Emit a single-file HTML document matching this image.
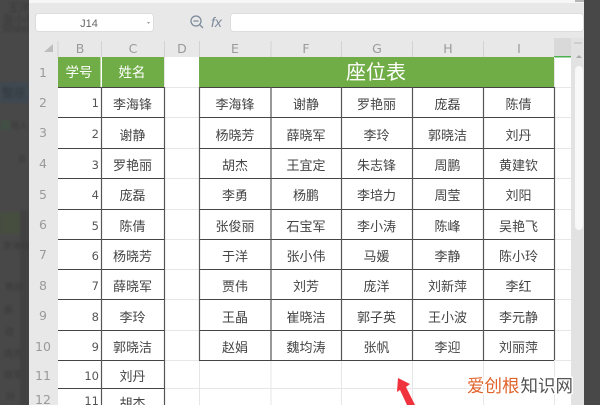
<!DOCTYPE html>
<html lang="zh"><head><meta charset="utf-8"><title>座位表</title>
<style>
html,body{margin:0;padding:0;width:600px;height:405px;overflow:hidden;background:#484848}
svg{display:block}
text{font-family:"Liberation Sans","Noto Sans CJK SC",sans-serif}
.c text{font-size:13px;fill:#444;text-anchor:middle}
.n text{font-family:"DejaVu Sans",sans-serif;font-size:11.5px;fill:#555;text-anchor:end}
.h text{font-family:"DejaVu Sans",sans-serif;font-size:12.5px;fill:#9a9a9a;text-anchor:middle}
</style></head><body>
<svg width="600" height="405" viewBox="0 0 600 405" xmlns="http://www.w3.org/2000/svg">
<defs><filter id="b1" color-interpolation-filters="sRGB"><feGaussianBlur stdDeviation="0.35"/></filter><filter id="b2" color-interpolation-filters="sRGB"><feGaussianBlur stdDeviation="1"/></filter></defs>
<rect width="600" height="405" fill="#484848"/>
<g filter="url(#b2)">
<rect x="0" y="82" width="29" height="21" fill="#3f4850"/>
<rect x="0" y="212" width="20" height="22" fill="#464e40"/>
<rect x="20" y="210" width="9" height="195" fill="#414141"/>
<rect x="1" y="120" width="9" height="10" fill="#414f44"/>
<g font-size="11" fill="#3a3a3a"><text x="8" y="11">王洋</text><text x="3" y="23">张小伟</text><text x="2" y="32">Sheet1</text><text x="2" y="97" font-size="12" fill="#333a40">整座</text><text x="11" y="128" font-size="8">插入</text><text x="19" y="162" font-size="10">B</text><text x="3" y="249" font-size="9">李海锋</text><text x="5" y="290" font-size="9">艳丽</text><text x="4" y="313" font-size="9">磊</text><text x="5" y="335" font-size="9">倩</text><text x="4" y="357" font-size="9">晓芳</text><text x="4" y="378" font-size="9">晓军</text><text x="6" y="400" font-size="9">玲</text></g>
</g>
<g filter="url(#b1)">
<rect x="29" y="0" width="555" height="405" fill="#e8e8e8"/>
<rect x="29" y="0" width="555" height="3" fill="#f6f6f6"/>
<rect x="575" y="0" width="9" height="2" fill="#b5b5b5"/>
<rect x="35.500" y="13.500" width="118" height="18" rx="3" fill="#fff" stroke="#ddd"/>
<text x="89" y="27" font-family="DejaVu Sans,sans-serif" font-size="11" fill="#666" text-anchor="middle">J14</text>
<path d="M147 22l3 0-1.500 2z" fill="#999"/>
<circle cx="196" cy="21" r="5" fill="none" stroke="#7d8a9a" stroke-width="1.300"/><path d="M193.500 21h5M200 25l3 3" stroke="#7d8a9a" stroke-width="1.300" fill="none"/>
<text x="211" y="27" font-family="Liberation Serif,serif" font-style="italic" font-size="14" fill="#7d8a9a">fx</text>
<rect x="230.500" y="13.500" width="353" height="18" rx="3" fill="#fff" stroke="#ddd"/>
<path d="M44 52l9-8v8z" fill="#bdbdbd"/>
<g stroke="#d2d2d2"><path d="M58 41v16M101.500 41v16M164.500 41v16M199.500 41v16M271 41v16M341.500 41v16M412.500 41v16M483.500 41v16"/></g>
<g class="h"><text x="80" y="53">B</text><text x="133" y="53">C</text><text x="182" y="53">D</text><text x="235" y="53">E</text><text x="306" y="53">F</text><text x="377" y="53">G</text><text x="448" y="53">H</text><text x="519" y="53">I</text>
<text x="43" y="77">1</text><text x="43" y="107">2</text><text x="43" y="137">3</text><text x="43" y="168">4</text><text x="43" y="199">5</text><text x="43" y="229">6</text><text x="43" y="259">7</text><text x="43" y="290">8</text><text x="43" y="320">9</text><text x="43" y="351">10</text><text x="43" y="380">11</text><text x="43" y="404">12</text></g>
<rect x="554" y="38" width="17" height="18" fill="#d9d9d9"/>
<rect x="58" y="57" width="513" height="348" fill="#fff"/>
<rect x="554" y="56" width="17" height="1.500" fill="#4caf50"/>
<path d="M58 117.500H571M58 148.500H571M58 178.500H571M58 209.500H571M58 239.500H571M58 269.500H571M58 299.500H571M58 330.500H571M58 360.500H571M58 388.500H571M58 87.500H571M164.500 57V405M199.500 87V405M271 360V405M341.500 360V405M412.500 360V405M483.500 360V405M554.500 57V405" stroke="#e6e6e6" fill="none"/>
<rect x="58" y="57" width="42.500" height="30" fill="#70ad47"/><rect x="102" y="57" width="62" height="30" fill="#70ad47"/><rect x="199" y="57" width="355" height="30" fill="#70ad47"/>
<path d="M58 87.500H164M58 117.500H164M58 148.500H164M58 178.500H164M58 209.500H164M58 239.500H164M58 269.500H164M58 299.500H164M58 330.500H164M58 360.500H164M58 388.500H164M199 87.500H554M199 117.500H554M199 148.500H554M199 178.500H554M199 209.500H554M199 239.500H554M199 269.500H554M199 299.500H554M199 330.500H554M199 360.500H554" stroke="#444" fill="none"/>
<path d="M101.500 87V405M164.500 87V405M199.500 87V360M271 87V360M341.500 87V360M412.500 87V360M483.500 87V360M554.500 87V360" stroke="#555" stroke-width="1.200" fill="none"/>
<text x="79" y="77" font-size="13.500" fill="#fff" text-anchor="middle">学号</text>
<text x="132" y="77" font-size="13.500" fill="#fff" text-anchor="middle">姓名</text>
<text x="376" y="79" font-size="20" fill="#fff" text-anchor="middle">座位表</text>
<g class="n"><text x="99" y="107">1</text><text x="99" y="138">2</text><text x="99" y="169">3</text><text x="99" y="199">4</text><text x="99" y="230">5</text><text x="99" y="260">6</text><text x="99" y="290">7</text><text x="99" y="321">8</text><text x="99" y="351">9</text><text x="99" y="380">10</text><text x="99" y="405">11</text></g>
<g class="c">
<text x="132.500" y="109">李海锋</text><text x="132.500" y="140">谢静</text><text x="132.500" y="170">罗艳丽</text><text x="132.500" y="200">庞磊</text><text x="132.500" y="231">陈倩</text><text x="132.500" y="261">杨晓芳</text><text x="132.500" y="291">薛晓军</text><text x="132.500" y="322">李玲</text><text x="132.500" y="352">郭晓洁</text><text x="132.500" y="381">刘丹</text><text x="132.500" y="408">胡杰</text>
<text x="235" y="109">李海锋</text><text x="306" y="109">谢静</text><text x="376.500" y="109">罗艳丽</text><text x="447.500" y="109">庞磊</text><text x="518.500" y="109">陈倩</text>
<text x="235" y="140">杨晓芳</text><text x="306" y="140">薛晓军</text><text x="376.500" y="140">李玲</text><text x="447.500" y="140">郭晓洁</text><text x="518.500" y="140">刘丹</text>
<text x="235" y="170">胡杰</text><text x="306" y="170">王宜定</text><text x="376.500" y="170">朱志锋</text><text x="447.500" y="170">周鹏</text><text x="518.500" y="170">黄建钦</text>
<text x="235" y="200">李勇</text><text x="306" y="200">杨鹏</text><text x="376.500" y="200">李培力</text><text x="447.500" y="200">周莹</text><text x="518.500" y="200">刘阳</text>
<text x="235" y="231">张俊丽</text><text x="306" y="231">石宝军</text><text x="376.500" y="231">李小涛</text><text x="447.500" y="231">陈峰</text><text x="518.500" y="231">吴艳飞</text>
<text x="235" y="261">于洋</text><text x="306" y="261">张小伟</text><text x="376.500" y="261">马媛</text><text x="447.500" y="261">李静</text><text x="518.500" y="261">陈小玲</text>
<text x="235" y="291">贾伟</text><text x="306" y="291">刘芳</text><text x="376.500" y="291">庞洋</text><text x="447.500" y="291">刘新萍</text><text x="518.500" y="291">李红</text>
<text x="235" y="322">王晶</text><text x="306" y="322">崔晓洁</text><text x="376.500" y="322">郭子英</text><text x="447.500" y="322">王小波</text><text x="518.500" y="322">李元静</text>
<text x="235" y="352">赵娟</text><text x="306" y="352">魏均涛</text><text x="376.500" y="352">张帆</text><text x="447.500" y="352">李迎</text><text x="518.500" y="352">刘丽萍</text>
</g>
<rect x="571" y="38" width="13" height="367" fill="#e2e2e2"/>
<rect x="574" y="42" width="8" height="2" fill="#cfcfcf"/>
<path d="M576 58l3-3 3 3z" fill="#aaa"/>
<rect x="575" y="66" width="8" height="164" rx="4" fill="#f8f8f8"/>
<path d="M398 378l12 6-4 3 9 18h-8l-7-15-3 2z" fill="#f0323c"/>
</g>
<rect x="584" y="0" width="16" height="405" fill="#484848"/>
<g font-size="17.500" stroke="#fff" stroke-width="3" stroke-linejoin="round" paint-order="stroke">
<text x="467" y="392" fill="#e0622a">爱创根</text>
<text x="520.500" y="392" fill="#555">知识网</text>
</g>
</svg>
</body></html>
